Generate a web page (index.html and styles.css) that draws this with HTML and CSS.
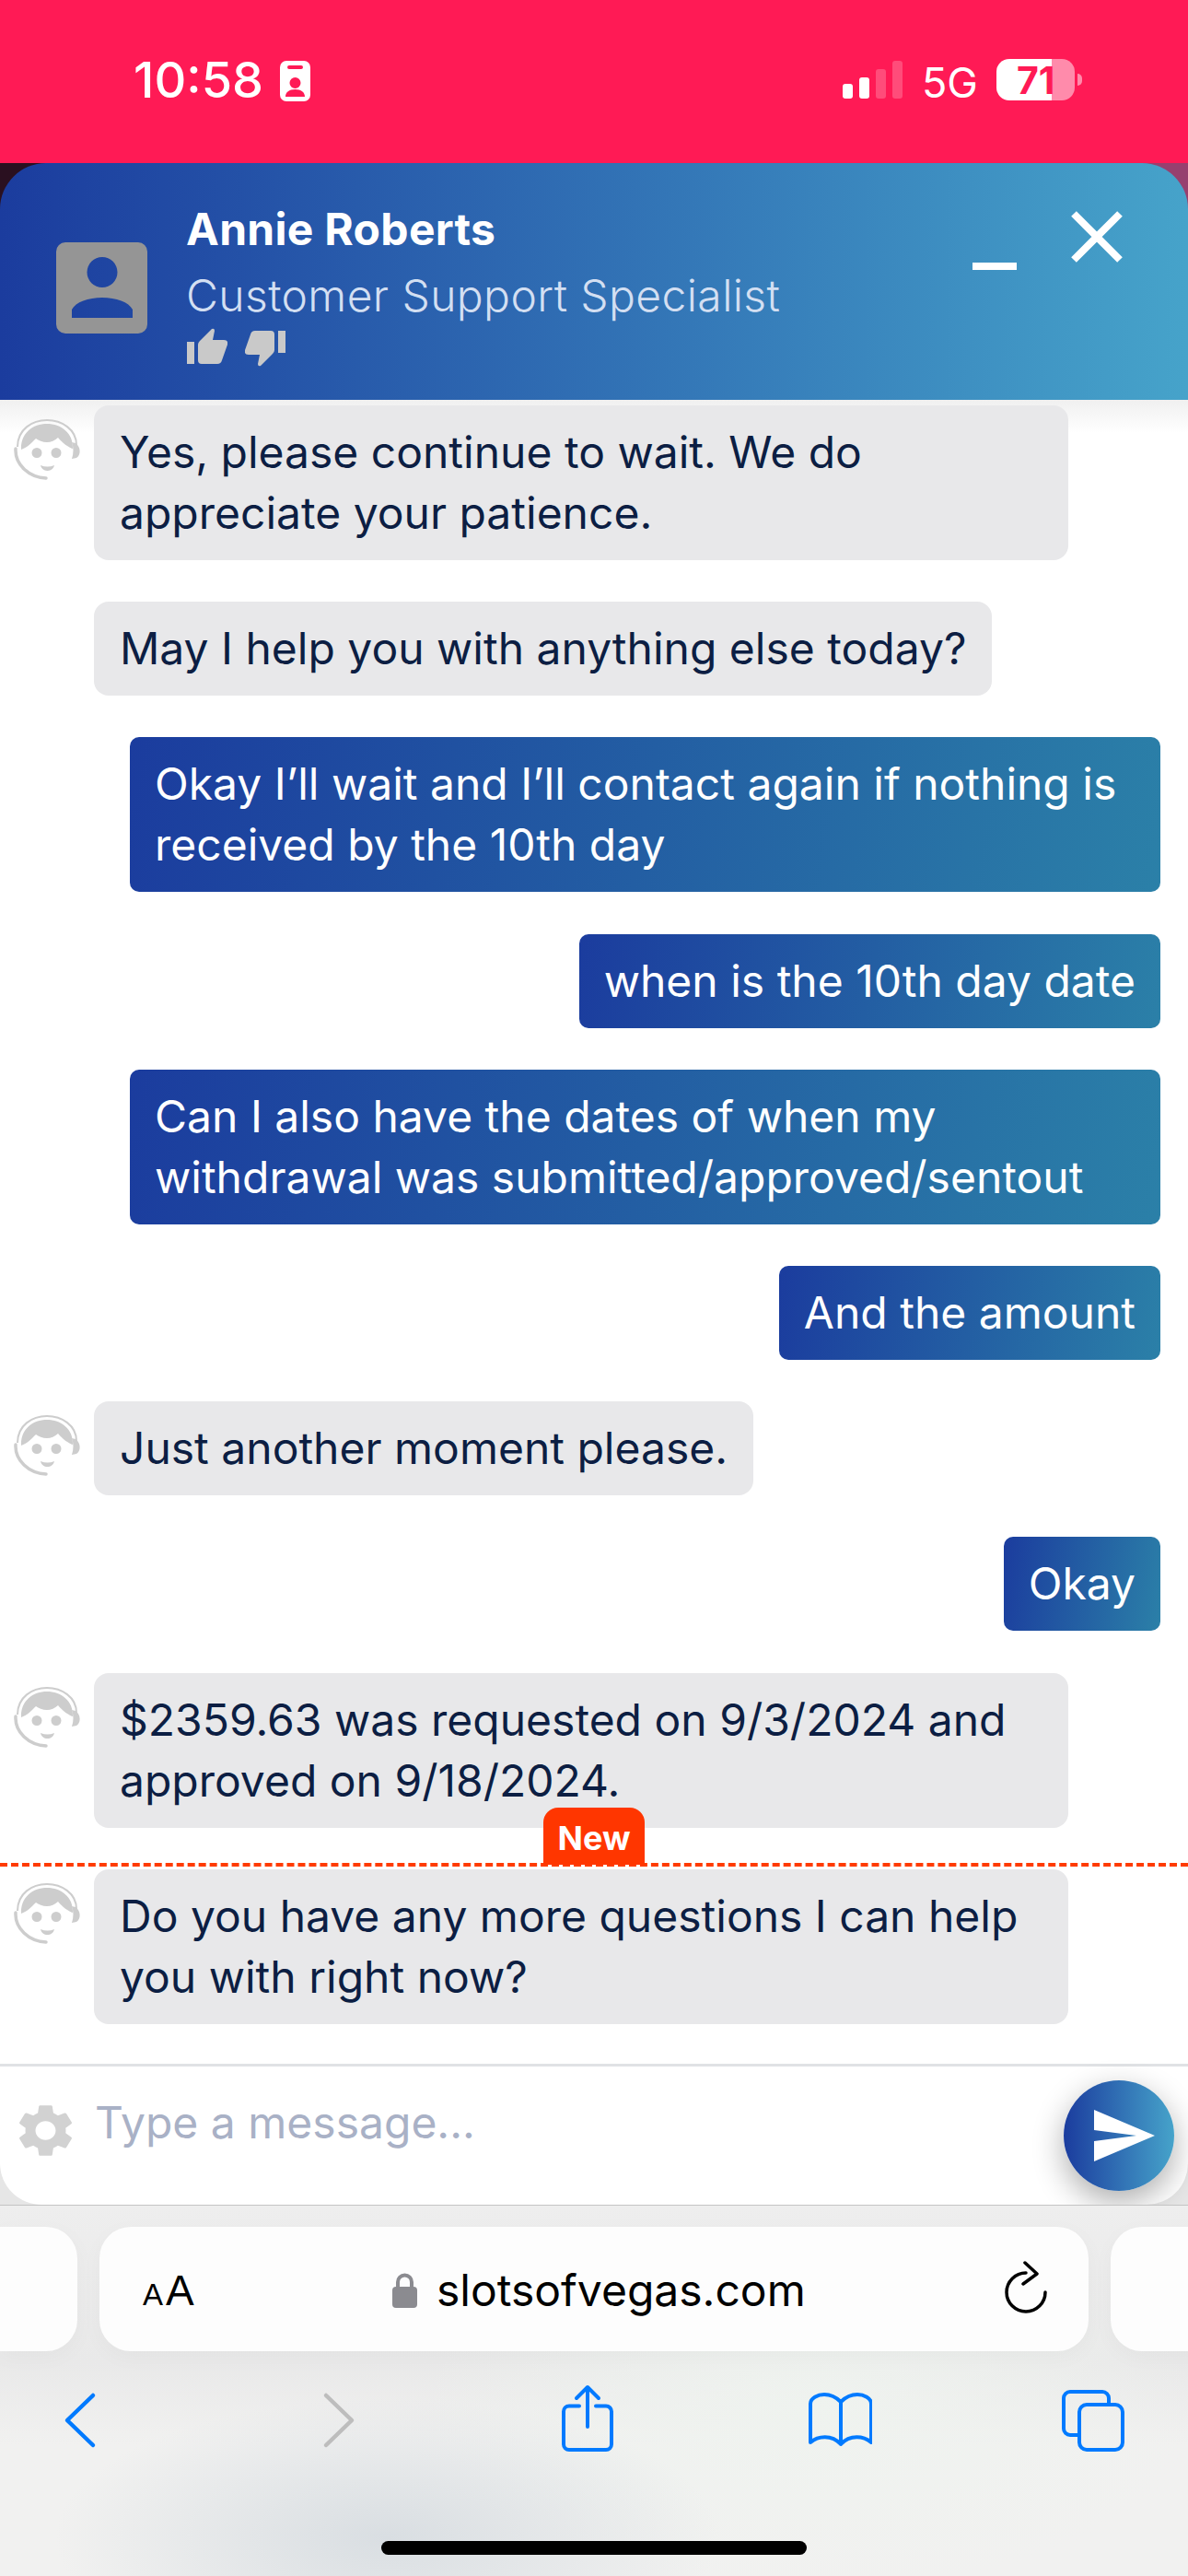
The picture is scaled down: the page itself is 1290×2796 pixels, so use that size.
FILE: index.html
```html
<!DOCTYPE html>
<html>
<head>
    <meta charset="UTF-8"/>
    <title>Live chat</title>
    <link rel="stylesheet" href="styles.css">
</head>
<body>
<div id="screen">

    <div class="status">
        <span class="time">10:58</span>
        <svg class="badge-icon" viewBox="0 0 33 44">
            <path fill="#fff" fill-rule="evenodd" d="M7 0h19a7 7 0 0 1 7 7v30a7 7 0 0 1-7 7H7a7 7 0 0 1-7-7V7a7 7 0 0 1 7-7zM10 5a1.500 1.500 0 0 0 0 4h13a1.500 1.500 0 0 0 0-4zM16.500 18a6 6 0 1 0 0 12 6 6 0 0 0 0-12zM6 39h21c0-5-4-8-10.500-8S6 34 6 39z"/>
        </svg>
        <div class="signal">
            <span class="bar bar1"></span>
            <span class="bar bar2"></span>
            <span class="bar bar3 dim"></span>
            <span class="bar bar4 dim"></span>
        </div>
        <span class="net">5G</span>
        <div class="battery">71</div>
        <span class="nub"></span>
    </div>

    <div class="chat">
        <div class="head">
            <svg class="agent-pic" viewBox="0 0 99 99">
                <path fill="#959595" fill-rule="evenodd" d="M10 0h79a10 10 0 0 1 10 10v79a10 10 0 0 1-10 10H10a10 10 0 0 1-10-10V10A10 10 0 0 1 10 0zM50 16a16.500 16.500 0 1 0 0 33 16.500 16.500 0 0 0 0-33zM17 82h66v-9c-4-8-18-13-33-13s-29 5-33 13z"/>
            </svg>
            <div class="who">
                <div class="name">Annie Roberts</div>
                <div class="role">Customer Support Specialist</div>
                <div class="thumbs">
                    <svg class="thumb" viewBox="0 0 44 39">
                        <path fill="#c9c9c9" d="M0 15h8v24H0zM14 14L27 1q3-1 3 2l-2 10h12q5 0 4 5l-6 17q-1 4-5 4H16q-4 0-4-4V18q0-2 2-4z"/>
                    </svg>
                    <svg class="thumb down" viewBox="0 0 44 39">
                        <path fill="#c9c9c9" d="M0 15h8v24H0zM14 14L27 1q3-1 3 2l-2 10h12q5 0 4 5l-6 17q-1 4-5 4H16q-4 0-4-4V18q0-2 2-4z"/>
                    </svg>
                </div>
            </div>
            <div class="controls">
                <span class="minus"></span>
                <svg class="close" viewBox="0 0 56 56">
                    <path stroke="#fff" stroke-width="8" d="M3 3l50 50M53 3L3 53"/>
                </svg>
            </div>
        </div>

        <div class="messages">
            <div class="row">
                <svg class="face" viewBox="0 0 72 66">
                    <path fill="#cdcdcd" d="M8 33C7 15 21 5 36 5s29 10 28 27c-4-1-11-6-16-12-3 3-8 5-12 5-5 0-9-2-12-4-5 5-10 10-16 12z"/>
                    <path fill="none" stroke="#cdcdcd" stroke-width="2" d="M4 30C4 11 20 1 36 1s32 10 32 27"/>
                    <path fill="none" stroke="#cdcdcd" stroke-width="3.500" stroke-linecap="round" d="M2 32c-1 17 14 31 33 32"/>
                    <path fill="#cdcdcd" d="M63 25l4 1c6 4 6 13 1 16l-5 1c2-6 2-12 0-18zM25 31a5.500 5.500 0 1 0 0 11 5.500 5.500 0 0 0 0-11zM46 31a5.500 5.500 0 1 0 0 11 5.500 5.500 0 0 0 0-11zM29 50c5 2 10 2 15 0-1 4-4 6-7.500 6S30 54 29 50z"/>
                </svg>
                <div class="bubble agent">Yes, please continue to wait. We do appreciate your patience.</div>
            </div>
            <div class="row">
                <div class="bubble agent">May I help you with anything else today?</div>
            </div>
            <div class="row mine">
                <div class="bubble user">Okay I’ll wait and I’ll contact again if nothing is received by the 10th day</div>
            </div>
            <div class="row mine">
                <div class="bubble user">when is the 10th day date</div>
            </div>
            <div class="row mine">
                <div class="bubble user">Can I also have the dates of when my withdrawal was submitted/approved/sentout</div>
            </div>
            <div class="row mine">
                <div class="bubble user">And the amount</div>
            </div>
            <div class="row">
                <svg class="face" viewBox="0 0 72 66">
                    <path fill="#cdcdcd" d="M8 33C7 15 21 5 36 5s29 10 28 27c-4-1-11-6-16-12-3 3-8 5-12 5-5 0-9-2-12-4-5 5-10 10-16 12z"/>
                    <path fill="none" stroke="#cdcdcd" stroke-width="2" d="M4 30C4 11 20 1 36 1s32 10 32 27"/>
                    <path fill="none" stroke="#cdcdcd" stroke-width="3.500" stroke-linecap="round" d="M2 32c-1 17 14 31 33 32"/>
                    <path fill="#cdcdcd" d="M63 25l4 1c6 4 6 13 1 16l-5 1c2-6 2-12 0-18zM25 31a5.500 5.500 0 1 0 0 11 5.500 5.500 0 0 0 0-11zM46 31a5.500 5.500 0 1 0 0 11 5.500 5.500 0 0 0 0-11zM29 50c5 2 10 2 15 0-1 4-4 6-7.500 6S30 54 29 50z"/>
                </svg>
                <div class="bubble agent">Just another moment please.</div>
            </div>
            <div class="row mine">
                <div class="bubble user">Okay</div>
            </div>
            <div class="row">
                <svg class="face" viewBox="0 0 72 66">
                    <path fill="#cdcdcd" d="M8 33C7 15 21 5 36 5s29 10 28 27c-4-1-11-6-16-12-3 3-8 5-12 5-5 0-9-2-12-4-5 5-10 10-16 12z"/>
                    <path fill="none" stroke="#cdcdcd" stroke-width="2" d="M4 30C4 11 20 1 36 1s32 10 32 27"/>
                    <path fill="none" stroke="#cdcdcd" stroke-width="3.500" stroke-linecap="round" d="M2 32c-1 17 14 31 33 32"/>
                    <path fill="#cdcdcd" d="M63 25l4 1c6 4 6 13 1 16l-5 1c2-6 2-12 0-18zM25 31a5.500 5.500 0 1 0 0 11 5.500 5.500 0 0 0 0-11zM46 31a5.500 5.500 0 1 0 0 11 5.500 5.500 0 0 0 0-11zM29 50c5 2 10 2 15 0-1 4-4 6-7.500 6S30 54 29 50z"/>
                </svg>
                <div class="bubble agent">$2359.63 was requested on 9/3/2024 and approved on 9/18/2024.</div>
            </div>
            <div class="row">
                <div class="new-line"><span class="new-tag">New</span></div>
                <svg class="face" viewBox="0 0 72 66">
                    <path fill="#cdcdcd" d="M8 33C7 15 21 5 36 5s29 10 28 27c-4-1-11-6-16-12-3 3-8 5-12 5-5 0-9-2-12-4-5 5-10 10-16 12z"/>
                    <path fill="none" stroke="#cdcdcd" stroke-width="2" d="M4 30C4 11 20 1 36 1s32 10 32 27"/>
                    <path fill="none" stroke="#cdcdcd" stroke-width="3.500" stroke-linecap="round" d="M2 32c-1 17 14 31 33 32"/>
                    <path fill="#cdcdcd" d="M63 25l4 1c6 4 6 13 1 16l-5 1c2-6 2-12 0-18zM25 31a5.500 5.500 0 1 0 0 11 5.500 5.500 0 0 0 0-11zM46 31a5.500 5.500 0 1 0 0 11 5.500 5.500 0 0 0 0-11zM29 50c5 2 10 2 15 0-1 4-4 6-7.500 6S30 54 29 50z"/>
                </svg>
                <div class="bubble agent">Do you have any more questions I can help you with right now?</div>
            </div>
        </div>

        <div class="composer">
            <svg class="gear" viewBox="2 2 20 20" preserveAspectRatio="none">
                <path fill="#d2d2d2" d="M19.14 12.94c.04-.3.06-.61.06-.94 0-.32-.02-.64-.07-.94l2.03-1.58c.18-.14.23-.41.12-.61l-1.92-3.32c-.12-.22-.37-.29-.59-.22l-2.39.96c-.5-.38-1.03-.7-1.62-.94l-.36-2.54c-.04-.24-.24-.41-.48-.41h-3.84c-.24 0-.43.17-.47.41l-.36 2.54c-.59.24-1.13.57-1.62.94l-2.39-.96c-.22-.08-.47 0-.59.22L2.74 8.87c-.12.21-.08.47.12.61l2.03 1.58c-.05.3-.09.63-.09.94s.02.64.07.94l-2.03 1.58c-.18.14-.23.41-.12.61l1.92 3.32c.12.22.37.29.59.22l2.39-.96c.5.38 1.03.7 1.62.94l.36 2.54c.05.24.24.41.48.41h3.84c.24 0 .44-.17.47-.41l.36-2.54c.59-.24 1.13-.56 1.62-.94l2.39.96c.22.08.47 0 .59-.22l1.92-3.32c.12-.22.07-.47-.12-.61l-2.01-1.58zM12 15.6c-1.98 0-3.6-1.62-3.6-3.6s1.62-3.6 3.6-3.6 3.6 1.62 3.6 3.6-1.62 3.6-3.6 3.6z"/>
            </svg>
            <span class="placeholder">Type a message...</span>
            <div class="send">
                <svg class="plane" viewBox="0 0 66 56">
                    <path fill="#fff" d="M0 0l66 28L0 56V34l46-6-46-6z"/>
                </svg>
            </div>
        </div>
    </div>

    <div class="safari">
        <div class="tabs">
            <div class="pill"></div>
            <div class="pill url-pill">
                <span class="aa"><span class="small-a">A</span>A</span>
                <div class="url">
                    <svg class="lock" viewBox="0 0 27 38">
                        <path fill="none" stroke="#8b8b90" stroke-width="4" d="M6 16V10a7.500 7.500 0 0 1 15 0v6"/>
                        <rect fill="#8b8b90" y="15" width="27" height="23" rx="4"/>
                    </svg>
                    <span>slotsofvegas.com</span>
                </div>
                <svg class="reload" viewBox="0 0 48 58">
                    <path fill="none" stroke="#000" stroke-width="3.500" stroke-linecap="round" stroke-linejoin="round" d="M24 13A21 21 0 1 0 45 34M23 2l13 12-15 11"/>
                </svg>
            </div>
            <div class="pill"></div>
        </div>
        <div class="tools">
            <svg class="tool" viewBox="0 0 70 76">
                <path class="blue" d="M49 13L21 40l28 27"/>
            </svg>
            <svg class="tool" viewBox="0 0 70 76">
                <path class="grey" d="M27 13l28 27-28 27"/>
            </svg>
            <svg class="tool" viewBox="0 0 70 76">
                <path class="blue thin" d="M27 24.500H16a6 6 0 0 0-6 6V66a6 6 0 0 0 6 6h40a6 6 0 0 0 6-6V30.500a6 6 0 0 0-6-6H45M36 47V5M24 16L36 4l12 12"/>
            </svg>
            <svg class="tool" viewBox="0 0 70 76">
                <path class="blue thin" d="M36 66V20c-5-5-12-8-18-8-7 0-15 4-15 10v42c8-7 23-9 33 2 10-11 25-9 33-2V22c0-6-8-10-15-10-6 0-13 3-18 8"/>
            </svg>
            <svg class="tool" viewBox="0 0 70 76">
                <path class="blue thin" d="M18 56h-8a7 7 0 0 1-7-7V16a7 7 0 0 1 7-7h35a7 7 0 0 1 7 7v5"/>
                <rect class="blue thin" x="20" y="23" width="47" height="49" rx="8"/>
            </svg>
        </div>
        <div class="home-bar"></div>
    </div>

</div>
</body>
</html>
```
FILE: styles.css
```css
html, body {
margin: 0;
padding: 0;
}

body {
font-family: Inter, "Noto Sans", sans-serif;
}

#screen {
width: 1290px;
height: 2796px;
display: flex;
flex-direction: column;
overflow: hidden;
background: #fff;
}

/* phone status bar */
.status {
height: 177px;
flex: none;
background: #ff1a55;
color: #fff;
display: flex;
align-items: flex-start;
box-sizing: border-box;
padding-left: 145px;
}

.time {
font-size: 54px;
font-weight: 500;
line-height: 64px;
margin-top: 55px;
}

.badge-icon {
width: 33px;
height: 44px;
margin: 66px 0 0 18px;
}

.signal {
display: flex;
align-items: flex-end;
gap: 7px;
height: 41px;
margin: 66px 0 0 578px;
}

.bar {
width: 11px;
background: #fff;
border-radius: 3px;
}

.bar1 { height: 16px; }
.bar2 { height: 23px; }
.bar3 { height: 32px; }
.bar4 { height: 41px; }

.bar.dim {
background: rgba(255, 255, 255, 0.22);
}

.net {
font-size: 45px;
line-height: 56px;
margin: 62px 0 0 21px;
}

.battery {
width: 85px;
height: 45px;
margin: 64px 0 0 20px;
border-radius: 14px;
background: linear-gradient(90deg, #fff 60px, #ff8bab 60px);
color: #ff1a55;
font-size: 41px;
font-weight: 700;
line-height: 46px;
box-sizing: border-box;
padding-left: 22px;
}

.nub {
width: 5px;
height: 13px;
margin: 80px 0 0 3px;
border-radius: 0 6px 6px 0;
background: #ff8bab;
}

/* chat window */
.chat {
height: 2216px;
flex: none;
display: flex;
flex-direction: column;
background: linear-gradient(90deg, #2a1020 0, #2a1020 60px, #97406f 1230px);
}

.head {
height: 257px;
flex: none;
box-sizing: border-box;
padding: 42px 71px 0 61px;
display: flex;
align-items: flex-start;
color: #fff;
border-radius: 50px 50px 0 0;
background: linear-gradient(90deg, #1b3c9e, #46a3ca);
}

.agent-pic {
width: 99px;
height: 99px;
margin-top: 44px;
flex: none;
}

.who {
margin-left: 42px;
}

.name {
font-size: 48px;
font-weight: 700;
letter-spacing: 0.3px;
line-height: 60px;
}

.role {
font-size: 48px;
font-weight: 300;
letter-spacing: 0.4px;
line-height: 60px;
margin-top: 12px;
color: #d3dff2;
}

.thumbs {
display: flex;
align-items: flex-start;
gap: 19px;
margin-top: 5px;
margin-left: 1px;
}

.thumb {
width: 44px;
height: 39px;
}

.thumb.down {
margin-top: 3px;
transform: rotate(180deg);
}

.controls {
margin-left: auto;
margin-top: 10px;
display: flex;
align-items: flex-start;
}

.minus {
width: 48px;
height: 8px;
margin-top: 56px;
background: #fff;
}

.close {
width: 56px;
height: 56px;
margin-left: 59px;
}

.messages {
flex: 1;
box-sizing: border-box;
padding: 6px 30px 0 15px;
display: flex;
flex-direction: column;
gap: 45.200px;
background: linear-gradient(180deg, #f0f0f0, #fff 36px);
}

.row {
position: relative;
display: flex;
align-items: flex-start;
padding-left: 87px;
}

.row.mine {
justify-content: flex-end;
}

.face {
width: 72px;
height: 66px;
flex: none;
margin: 15px 15px 0 -87px;
}

.bubble {
font-size: 48px;
line-height: 66px;
padding: 18px 28px;
box-sizing: border-box;
}

.bubble.agent {
max-width: 1058px;
background: #e8e8ea;
color: #0c1e43;
border-radius: 16px;
}

.bubble.user {
max-width: 1119px;
padding: 18px 27px;
color: #fff;
border-radius: 10px;
background: linear-gradient(100deg, #1b3c9e, #2b80a8);
}

/* dashed marker above the unread message */
.new-line {
position: absolute;
left: -15px;
right: -30px;
top: -7px;
border-top: 4px dashed #ff3b00;
}

.new-tag {
position: absolute;
left: 590px;
bottom: 2px;
width: 110px;
height: 62px;
box-sizing: border-box;
padding-top: 13px;
border-radius: 16px 16px 0 0;
background: #ff3600;
color: #fff;
font-size: 36px;
font-weight: 700;
line-height: 40px;
text-align: center;
}

.composer {
height: 153px;
flex: none;
box-sizing: border-box;
border-top: 3px solid #e0e2e5;
padding: 15px 15px 0 19px;
display: flex;
align-items: flex-start;
background: #fff;
border-radius: 0 0 45px 45px;
box-shadow: 0 60px 0 #e6e6e6;
}

.gear {
width: 61px;
height: 57px;
margin-top: 26px;
flex: none;
}

.placeholder {
font-size: 48px;
line-height: 60px;
color: #a9b1c6;
margin: 16px 0 0 23px;
}

.send {
width: 120px;
height: 120px;
margin-left: auto;
border-radius: 50%;
display: flex;
align-items: center;
justify-content: center;
background: linear-gradient(90deg, #1b3c9e, #46a3ca);
box-shadow: 0 12px 34px rgba(0, 0, 0, 0.32);
}

.plane {
width: 66px;
height: 56px;
margin-left: 12px;
}

/* safari bottom bar */
.safari {
flex: 1;
position: relative;
border-top: 1px solid #c4c4c4;
background:
    radial-gradient(ellipse 360px 150px at 420px 360px, #d9dee2, rgba(217, 222, 226, 0)),
    radial-gradient(ellipse 420px 200px at 880px 220px, #eff3ef, rgba(239, 243, 239, 0)),
    linear-gradient(180deg, #eeeeee, #e9e9e9 170px, #f1f1f0 260px);
}

.tabs {
display: grid;
grid-template-columns: 84px 1074px 1fr;
gap: 24px;
padding-top: 23px;
width: 1400px;
}

.pill {
height: 135px;
background: #fdfdfd;
border-radius: 34px;
box-shadow: 0 6px 24px rgba(0, 0, 0, 0.03);
}

.pill:first-child {
border-radius: 0 34px 34px 0;
}

.url-pill {
display: flex;
align-items: flex-start;
justify-content: space-between;
padding: 0 44px 0 47px;
box-sizing: border-box;
color: #000;
}

.aa {
font-family: "Liberation Sans", sans-serif;
font-size: 46px;
line-height: 50px;
margin-top: 44px;
}

.small-a {
font-size: 33px;
margin-right: 3px;
}

.url {
display: flex;
align-items: flex-start;
font-size: 48px;
line-height: 56px;
margin-top: 41px;
margin-left: 0;
}

.lock {
width: 27px;
height: 38px;
margin: 9px 21px 0 0;
}

.reload {
width: 48px;
height: 58px;
margin-top: 37px;
}

.tools {
display: flex;
justify-content: space-between;
padding: 0 68px 0 52px;
margin-top: 35px;
}

.tool {
width: 70px;
height: 76px;
}

.tool .blue, .tool .grey {
fill: none;
stroke-width: 4.500;
stroke-linecap: round;
stroke-linejoin: round;
}

.tool .blue {
stroke: #007aff;
}

.tool .grey {
stroke: #bdbdbd;
}

.tool .thin {
stroke-width: 4;
}

.home-bar {
position: absolute;
left: 414px;
top: 364px;
width: 462px;
height: 15px;
border-radius: 8px;
background: #000;
}
```
